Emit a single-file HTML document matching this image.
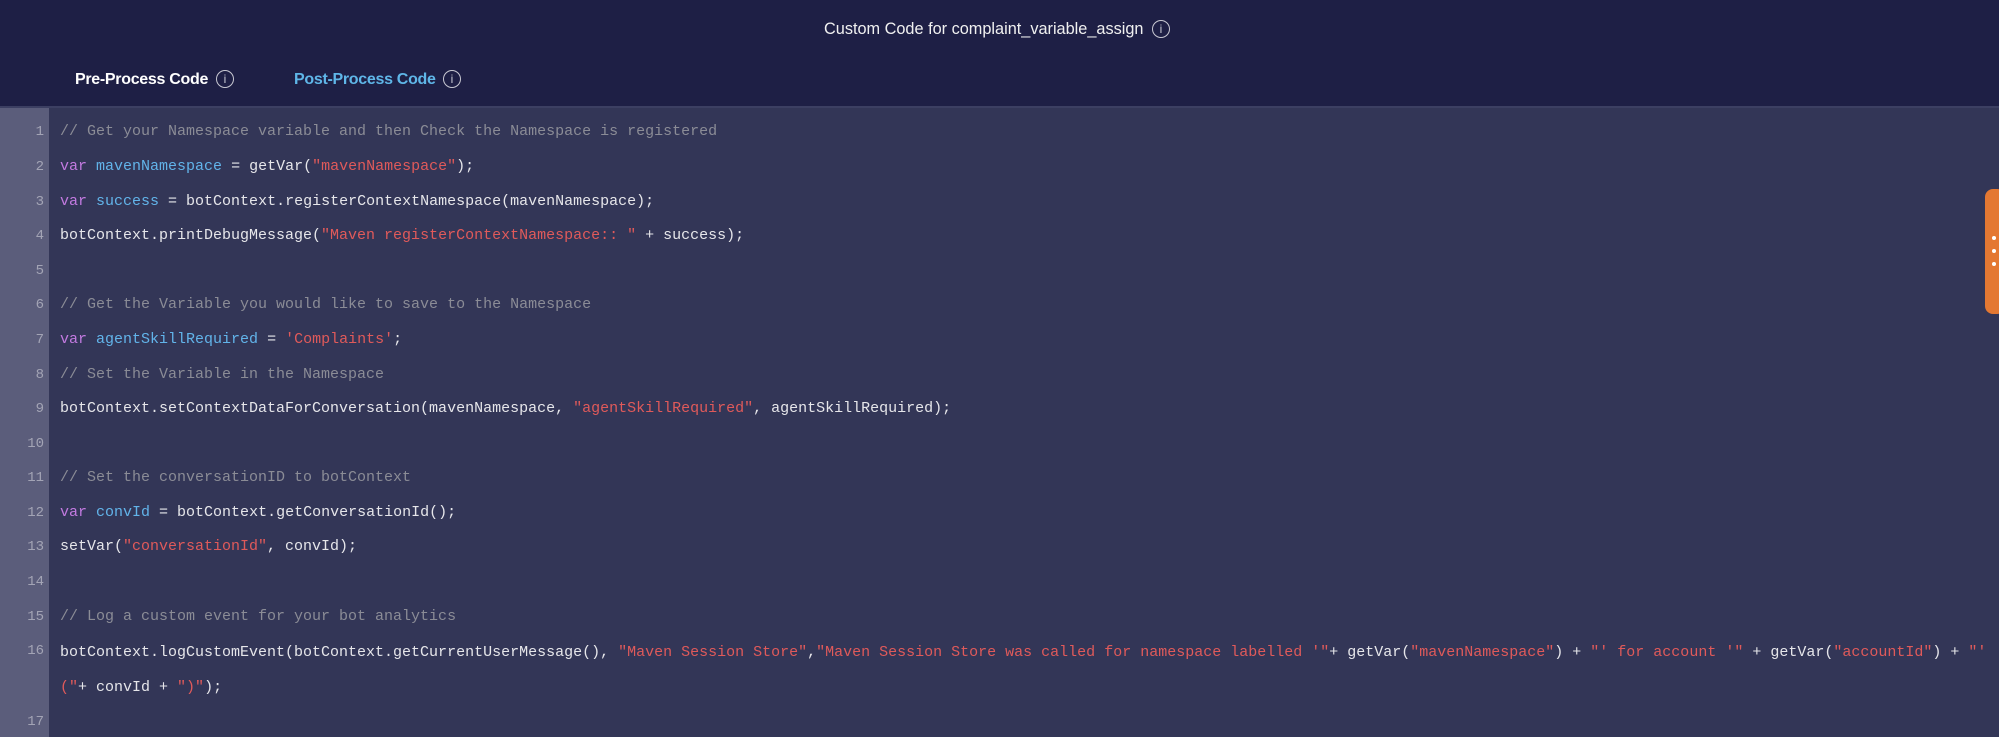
<!DOCTYPE html>
<html><head><meta charset="utf-8"><style>
body{margin:0;width:1999px;height:737px;overflow:hidden;background:#333657;font-family:"Liberation Sans",sans-serif;position:relative}
.hdr{position:absolute;left:0;top:0;width:1999px;height:108px;background:#1e1f45;border-bottom:2px solid #3c3f62;box-sizing:border-box}
.t{position:absolute;top:20px;left:824px;color:#f0f0f0;font-size:16.3px;white-space:nowrap}
.ic{position:absolute;width:16px;height:16px;border:1.5px solid #c8c8d2;border-radius:50%;color:#c8c8d2;font-size:12px;text-align:center;line-height:16px;font-family:"Liberation Sans",sans-serif}
.tab{position:absolute;top:71px;font-size:16px;font-weight:bold;white-space:nowrap;letter-spacing:-0.3px}
.gut{position:absolute;left:0;top:108px;width:49px;height:629px;background:#5b5d7b}
.ln{position:absolute;left:0;width:44px;text-align:right;color:#a3a4b5;font-family:"Liberation Mono",monospace;font-size:14px;line-height:20px}
.cd{position:absolute;left:60px;white-space:pre;color:#e6e6ea;font-family:"Liberation Mono",monospace;font-size:15px;line-height:20px;width:1930px;overflow:hidden}
.c{color:#8b8c96}.k{color:#c27ae0}.v{color:#62b4ea}.s{color:#e05a5a}
.or{position:absolute;left:1985px;top:189px;width:20px;height:125px;background:#e47832;border-radius:8px}
.dot{position:absolute;left:1992px;width:4px;height:4px;border-radius:50%;background:#fff}
</style></head><body>
<div class="hdr">
<div class="t">Custom Code for complaint_variable_assign</div>
<div class="ic" style="left:1152px;top:20px">i</div>
<div class="tab" style="left:75px;color:#fff">Pre-Process Code</div>
<div class="ic" style="left:216px;top:70px">i</div>
<div class="tab" style="left:294px;color:#5fb6e8">Post-Process Code</div>
<div class="ic" style="left:443px;top:70px">i</div>
</div>
<div class="gut"></div>
<div class="ln" style="top:122px">1</div><div class="cd" style="top:122px"><span class="c">// Get your Namespace variable and then Check the Namespace is registered</span></div>
<div class="ln" style="top:157px">2</div><div class="cd" style="top:157px"><span class="k">var</span> <span class="v">mavenNamespace</span> = getVar(<span class="s">"mavenNamespace"</span>);</div>
<div class="ln" style="top:192px">3</div><div class="cd" style="top:192px"><span class="k">var</span> <span class="v">success</span> = botContext.registerContextNamespace(mavenNamespace);</div>
<div class="ln" style="top:226px">4</div><div class="cd" style="top:226px">botContext.printDebugMessage(<span class="s">"Maven registerContextNamespace:: "</span> + success);</div>
<div class="ln" style="top:261px">5</div>
<div class="ln" style="top:295px">6</div><div class="cd" style="top:295px"><span class="c">// Get the Variable you would like to save to the Namespace</span></div>
<div class="ln" style="top:330px">7</div><div class="cd" style="top:330px"><span class="k">var</span> <span class="v">agentSkillRequired</span> = <span class="s">'Complaints'</span>;</div>
<div class="ln" style="top:365px">8</div><div class="cd" style="top:365px"><span class="c">// Set the Variable in the Namespace</span></div>
<div class="ln" style="top:399px">9</div><div class="cd" style="top:399px">botContext.setContextDataForConversation(mavenNamespace, <span class="s">"agentSkillRequired"</span>, agentSkillRequired);</div>
<div class="ln" style="top:434px">10</div>
<div class="ln" style="top:468px">11</div><div class="cd" style="top:468px"><span class="c">// Set the conversationID to botContext</span></div>
<div class="ln" style="top:503px">12</div><div class="cd" style="top:503px"><span class="k">var</span> <span class="v">convId</span> = botContext.getConversationId();</div>
<div class="ln" style="top:537px">13</div><div class="cd" style="top:537px">setVar(<span class="s">"conversationId"</span>, convId);</div>
<div class="ln" style="top:572px">14</div>
<div class="ln" style="top:607px">15</div><div class="cd" style="top:607px"><span class="c">// Log a custom event for your bot analytics</span></div>
<div class="ln" style="top:641px">16</div><div class="cd" style="top:643px">botContext.logCustomEvent(botContext.getCurrentUserMessage(), <span class="s">"Maven Session Store"</span>,<span class="s">"Maven Session Store was called for namespace labelled '"</span>+ getVar(<span class="s">"mavenNamespace"</span>) + <span class="s">"' for account '"</span> + getVar(<span class="s">"accountId"</span>) + <span class="s">"'</span></div>
<div class="cd" style="top:678px"><span class="s">("</span>+ convId + <span class="s">")"</span>);</div>
<div class="ln" style="top:712px">17</div>
<div class="or"></div>
<div class="dot" style="top:236px"></div><div class="dot" style="top:249px"></div><div class="dot" style="top:262px"></div>
</body></html>
